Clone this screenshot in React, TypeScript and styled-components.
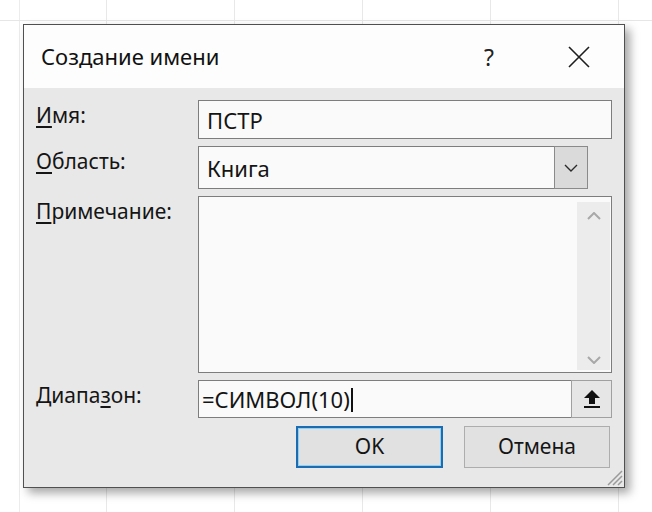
import React from 'react';
import styled, { createGlobalStyle } from 'styled-components';

const GlobalStyle = createGlobalStyle`
    html, body {
        margin: 0;
        padding: 0;
    }
    body {
        width: 652px;
        height: 512px;
        overflow: hidden;
        background-color: #ffffff;
        background-image:
            linear-gradient(#e6e6e6, #e6e6e6),
            linear-gradient(90deg, transparent 19px, #ececec 19px, #ececec 20px, transparent 20px),
            repeating-linear-gradient(90deg, transparent 0, transparent 106px, #e8e8e8 106px, #e8e8e8 107px, transparent 107px, transparent 128px);
        background-size: 652px 1px, 652px 512px, 652px 512px;
        background-position: 0 20px, 0 0, 0 0;
        background-repeat: no-repeat;
        font-family: "Noto Sans", "Open Sans", sans-serif;
        color: #1b1b1b;
    }
`;

const Page = styled.div`
    padding: 24px 0 0 23px;
`;

const Dialog = styled.div`
    position: relative;
    width: 602px;
    height: 464px;
    box-sizing: border-box;
    border: 1px solid #505050;
    display: flex;
    flex-direction: column;
    background: #e8e8e8;
    box-shadow: 5px 5px 9px rgba(0, 0, 0, 0.35);
`;

const TitleBar = styled.div`
    height: 63px;
    flex: none;
    background: #fdfdfd;
    display: flex;
    align-items: center;
    padding: 0 25px 0 17px;
    gap: 50px;
`;

const Title = styled.div`
    flex: 1;
    font-size: 22px;
    color: #111;
    padding-bottom: 2px;
`;

const TitleButton = styled.div`
    width: 40px;
    height: 40px;
    display: flex;
    align-items: center;
    justify-content: center;
    font-size: 23px;
    color: #222;
`;

const Body = styled.div`
    flex: 1;
    display: grid;
    grid-template-columns: 162px 1fr;
    row-gap: 7px;
    align-content: start;
    padding: 12px 12px 0 12px;
`;

const Label = styled.div`
    font-size: 21px;
    line-height: 28px;
    padding-top: 1px;
    color: #151515;
`;

const Key = styled.span`
    text-decoration: underline;
    text-underline-offset: 3px;
    text-decoration-thickness: 2px;
`;

const Field = styled.div<{ $h: number; $right?: number }>`
    height: ${p => p.$h}px;
    margin-right: ${p => p.$right || 0}px;
    box-sizing: border-box;
    border: 1px solid #7d7d7d;
    background: #fafafa;
    display: flex;
    align-items: center;
    font-size: 22px;
    color: #141414;
`;

const FieldText = styled.div<{ $pad: number }>`
    flex: 1;
    padding-left: ${p => p.$pad}px;
    white-space: nowrap;
`;

const Caret = styled.span`
    display: inline-block;
    width: 2px;
    height: 24px;
    background: #111;
    vertical-align: -4px;
    margin-left: 1px;
`;

const ComboButton = styled.div`
    width: 34px;
    height: 43px;
    margin: -1px -1px -1px 0;
    box-sizing: border-box;
    border: 1px solid #8a8a8a;
    background: #dadada;
    display: flex;
    align-items: center;
    justify-content: center;
`;

const NoteArea = styled.div`
    height: 177px;
    box-sizing: border-box;
    border: 1px solid #7d7d7d;
    background: #fafafa;
    display: flex;
    justify-content: flex-end;
    padding: 5px 1px 2px 0;
`;

const ScrollBar = styled.div`
    width: 33px;
    background: #ececec;
    display: flex;
    flex-direction: column;
    justify-content: space-between;
    align-items: center;
    padding: 10px 0 6px;
`;

const RefButton = styled.div`
    width: 41px;
    height: 38px;
    margin: -1px -1px -1px 0;
    box-sizing: border-box;
    border: 1px solid #a0a0a0;
    background: #e6e6e6;
    display: flex;
    align-items: center;
    justify-content: center;
`;

const Footer = styled.div`
    grid-column: 2;
    display: flex;
    justify-content: flex-end;
    gap: 21px;
    margin-top: 1px;
    margin-right: 2px;
`;

const Button = styled.div<{ $primary?: boolean }>`
    width: ${p => (p.$primary ? 147 : 146)}px;
    height: 42px;
    box-sizing: border-box;
    background: #e1e1e1;
    border: ${p => (p.$primary ? '2px solid #1a6db3' : '1px solid #adadad')};
    box-shadow: ${p => (p.$primary ? 'inset 0 0 0 1px #8fd1f2' : 'none')};
    display: flex;
    align-items: center;
    justify-content: center;
    font-size: 21px;
    color: #151515;
    padding-bottom: 2px;
`;

const Grip = styled.svg`
    position: absolute;
    right: 1px;
    bottom: 1px;
`;

const Chevron: React.FC<{ up?: boolean; color: string; w: number; h: number; sw: number }> = ({ up, color, w, h, sw }) => (
    <svg width={w} height={h} viewBox={`0 0 ${w} ${h}`}>
        <polyline
            points={up ? `1,${h - 1} ${w / 2},1 ${w - 1},${h - 1}` : `1,1 ${w / 2},${h - 1} ${w - 1},1`}
            fill="none"
            stroke={color}
            strokeWidth={sw}
        />
    </svg>
);

export default function App() {
    return (
        <>
            <GlobalStyle />
            <Page>
                <Dialog>
                    <TitleBar>
                        <Title>Создание имени</Title>
                        <TitleButton>?</TitleButton>
                        <TitleButton>
                            <svg width="22" height="22" viewBox="0 0 22 22">
                                <path d="M1 1 L21 21 M21 1 L1 21" stroke="#1e1e1e" strokeWidth="1.6" />
                            </svg>
                        </TitleButton>
                    </TitleBar>
                    <Body>
                        <Label><Key>И</Key>мя:</Label>
                        <Field $h={39}>
                            <FieldText $pad={8}>ПСТР</FieldText>
                        </Field>

                        <Label><Key>О</Key>бласть:</Label>
                        <Field $h={43} $right={24}>
                            <FieldText $pad={8}>Книга</FieldText>
                            <ComboButton>
                                <Chevron color="#2a2a2a" w={14} h={8} sw={1.4} />
                            </ComboButton>
                        </Field>

                        <Label><Key>П</Key>римечание:</Label>
                        <NoteArea>
                            <ScrollBar>
                                <Chevron up color="#a8a8a8" w={14} h={8} sw={2} />
                                <Chevron color="#a8a8a8" w={14} h={8} sw={2} />
                            </ScrollBar>
                        </NoteArea>

                        <Label>Диапа<Key>з</Key>он:</Label>
                        <Field $h={38}>
                            <FieldText $pad={3}>=СИМВОЛ(10)<Caret /></FieldText>
                            <RefButton>
                                <svg width="18" height="20" viewBox="0 0 18 20">
                                    <path d="M9 1 L17 9 L12 9 L12 15 L6 15 L6 9 L1 9 Z" fill="#111" />
                                    <rect x="1" y="17" width="16" height="2" fill="#111" />
                                </svg>
                            </RefButton>
                        </Field>

                        <Footer>
                            <Button $primary>OK</Button>
                            <Button>Отмена</Button>
                        </Footer>
                    </Body>
                    <Grip width="18" height="18" viewBox="0 0 18 18">
                        <path d="M17 3 L3 17 M17 8 L8 17 M17 13 L13 17" stroke="#9a9a9a" strokeWidth="1.5" />
                    </Grip>
                </Dialog>
            </Page>
        </>
    );
}
